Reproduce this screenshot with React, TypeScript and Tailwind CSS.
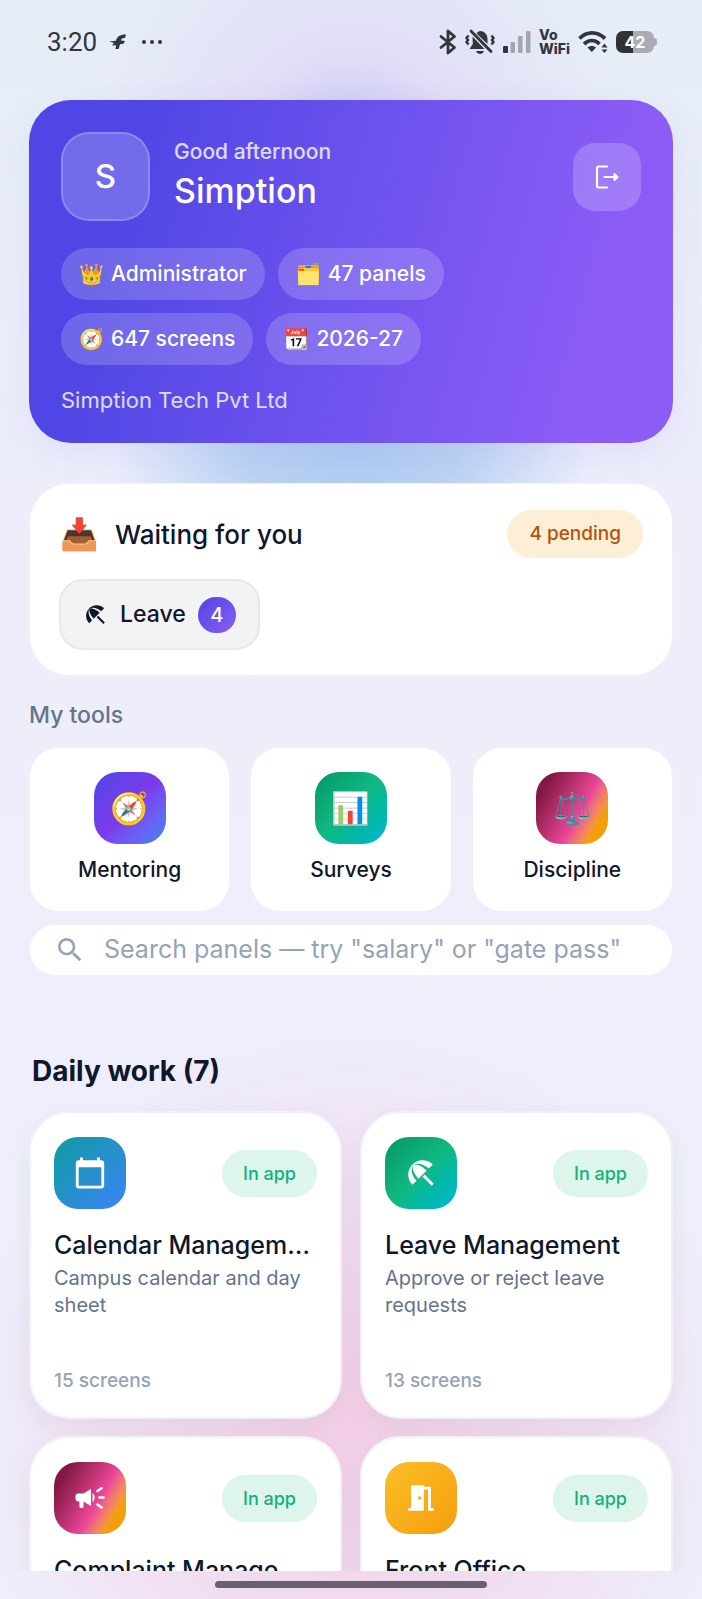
import type { ReactNode } from "react";
import { MdBeachAccess, MdCalendarToday, MdMeetingRoom, MdSearch } from "react-icons/md";

const chips = [
  { emoji: "👑", label: "Administrator" },
  { emoji: "🗂️", label: "47 panels" },
  { emoji: "🧭", label: "647 screens" },
  { emoji: "📆", label: "2026-27" },
];

const tools = [
  { name: "Mentoring", emoji: "🧭", tile: "bg-linear-135 from-[#4f46e5] via-[#7c3aed] to-[#3b82f6]" },
  { name: "Surveys", emoji: "📊", tile: "bg-linear-135 from-[#059669] via-[#10b981] to-[#06b6d4]" },
  { name: "Discipline", emoji: "⚖️", tile: "bg-linear-120 from-[#831843] from-15% via-[#ec4899] via-60% to-[#f59e0b] to-80%" },
];

const panels = [
  {
    name: "Calendar Management",
    text: "Campus calendar and day sheet",
    screens: 15,
    icon: <MdCalendarToday />,
    tile: "bg-linear-135 from-[#0d9a9f] to-[#3b82f6]",
  },
  {
    name: "Leave Management",
    text: "Approve or reject leave requests",
    screens: 13,
    icon: <MdBeachAccess />,
    tile: "bg-linear-135 from-[#059669] via-[#10b981] to-[#06b6d4]",
  },
  {
    name: "Complaint Management",
    icon: <MegaphoneIcon />,
    tile: "bg-linear-120 from-[#831843] from-15% via-[#ec4899] via-60% to-[#f59e0b] to-80%",
  },
  {
    name: "Front Office",
    icon: <MdMeetingRoom />,
    tile: "bg-linear-135 from-[#fbbf24] to-[#f59e0b]",
  },
];

function MegaphoneIcon() {
  return (
    <svg className="h-[22px] w-[30px]" viewBox="0 0 30 22" fill="currentColor" aria-hidden="true">
      <path d="M3 6.500h5.500L16 2v17l-7.500-4.500V20q0 1-1 1H5.500q-1 0-1-1v-5.500H3q-2.500-.2-2.500-2.700V9.200Q.5 6.700 3 6.500ZM17.500 5.800q2.200 2 2.200 4.700t-2.200 4.700Z" />
      <path d="m22.500 4 4-2.800M24.500 10.500h4M22.500 17.500l4 3" stroke="currentColor" strokeWidth="2.600" strokeLinecap="round" />
    </svg>
  );
}

function StatusBar() {
  return (
    <div className="flex h-[84px] shrink-0 items-center justify-between pr-[45px] pl-[47px] text-[#33353d]">
      <div className="flex items-center">
        <span className="font-[Roboto,sans-serif] text-[26px] leading-8">3:20</span>
        <svg className="ml-3 h-4 w-5" viewBox="0 0 20 16" fill="currentColor" aria-hidden="true">
          <path d="M0 7.500 7 6.800C8 2.500 11.500.3 17 .6L16 4c-2.500-.4-3.500.5-4 2.600L16 7 14.500 9.800 11 10.200 9.600 15H6.400L7.200 11.200 3 11.500 5 9Z" />
        </svg>
        <svg className="ml-3 h-2 w-6" viewBox="0 0 24 8" fill="currentColor" aria-hidden="true">
          <circle cx="3" cy="4" r="2" />
          <circle cx="11" cy="4" r="2" />
          <circle cx="19" cy="4" r="2" />
        </svg>
      </div>
      <div className="flex items-center">
        <svg className="h-[26px] w-[18px]" viewBox="0 0 18 26" fill="none" stroke="currentColor" strokeWidth="2.800" strokeLinejoin="round" strokeLinecap="round" aria-hidden="true">
          <path d="M2 7.500 15.500 18.500 9 24V2l6.500 5.500L2 18.500" />
        </svg>
        <svg className="ml-2 h-[26px] w-[30px]" viewBox="0 0 30 26" fill="none" stroke="currentColor" aria-hidden="true">
          <path d="M11.500 4.500C12.500 3 14 2 15 2c4 .2 7.500 3 7.500 7.500v5.500ZM7.500 7.500 7.800 15 4.500 20H19.500Z" fill="currentColor" stroke="none" />
          <path d="M11 22h8c-1 2.300-2.500 3-4 3s-3-.7-4-3Z" fill="currentColor" stroke="none" />
          <path d="M6 2 26 22.500" strokeWidth="2.800" strokeLinecap="round" />
          <path d="m3.500 6.500-2 2.500L3 11l-1.500 2 2 2.500M26.500 6.500l2 2.500L27 11l1.500 2-2 2.500" strokeWidth="2.400" />
        </svg>
        <svg className="ml-2 h-[23px] w-7" viewBox="0 0 28 23" aria-hidden="true">
          <rect x="0" y="15" width="5" height="7" rx="1" fill="#33353d" />
          <rect x="7.500" y="11" width="4.500" height="11" rx="1" fill="#a5a5b2" />
          <rect x="15" y="5" width="4.500" height="17" rx="1" fill="#a5a5b2" />
          <rect x="23" y="0" width="4.500" height="22" rx="1" fill="#a5a5b2" />
        </svg>
        <div className="ml-2 font-[Inter,sans-serif] text-[14px] leading-[14px] font-extrabold">
          <p>Vo</p>
          <p>WiFi</p>
        </div>
        <svg className="ml-2 h-6 w-[30px]" viewBox="0 0 30 24" fill="none" stroke="currentColor" aria-hidden="true">
          <path d="M1.500 8.500C9 1 19 1 27 8.500" strokeWidth="3.800" />
          <path d="M6 14c5-4.600 11-4.600 15.500 0" strokeWidth="3.800" />
          <path d="M9.500 17.500c2.500-2 6-2 8.500 0L13.800 22Z" fill="currentColor" stroke="none" />
          <path d="m26.500 13.500 3 4h-6ZM26.500 23l-3-3.500h6Z" fill="currentColor" stroke="none" />
        </svg>
        <div className="ml-2 flex items-center">
          <div className="flex h-[22px] w-[38px] items-center justify-center rounded-[7px] bg-linear-to-r from-[#2f3136] from-46% to-[#a9abb5] to-46% font-[Inter,sans-serif] text-[16px] leading-5 font-bold text-white">
            42
          </div>
          <div className="h-2 w-[3px] rounded-r-full bg-[#a9abb5]" />
        </div>
      </div>
    </div>
  );
}

function Tile({ className, children }: { className: string; children: ReactNode }) {
  return (
    <span className={`flex size-[72px] shrink-0 items-center justify-center rounded-3xl text-white ${className}`}>
      {children}
    </span>
  );
}

function HeaderCard() {
  return (
    <header className="rounded-[42px] bg-linear-105 from-[#4f46e5] from-15% to-[#8b5cf6] to-85% px-8 pt-8 pb-[30px] text-white shadow-[0_12px_40px_rgba(79,70,229,0.08)]">
      <div className="flex items-center gap-6">
        <div className="flex size-[89px] shrink-0 items-center justify-center rounded-[28px] border-2 border-white/20 bg-white/20 text-[33px] font-medium">
          S
        </div>
        <div className="min-w-0 flex-1">
          <p className="text-[21px] leading-7 font-medium text-white/80">Good afternoon</p>
          <h1 className="truncate text-[34px] leading-[50px] font-medium">Simption</h1>
        </div>
        <button type="button" aria-label="Log out" className="flex size-[68px] shrink-0 items-center justify-center rounded-[22px] bg-white/20">
          <svg className="h-6 w-6" viewBox="0 0 24 24" fill="none" stroke="currentColor" strokeWidth="2.200" strokeLinecap="round" strokeLinejoin="round" aria-hidden="true">
            <path d="M12 1.500H3.500Q2 1.500 2 3v18q0 1.500 1.500 1.500H12M9.500 12H20" />
            <path d="m19.500 9 3 3-3 3Z" fill="currentColor" strokeWidth="2" />
          </svg>
        </button>
      </div>
      <ul className="mt-[27px] flex max-w-[460px] flex-wrap gap-[13px]">
        {chips.map((chip) => (
          <li key={chip.label} className="flex h-[52px] items-center gap-[7px] rounded-full bg-white/18 px-[18px] text-[21px] font-medium">
            <span className="text-[20px]">{chip.emoji}</span>
            {chip.label}
          </li>
        ))}
      </ul>
      <p className="mt-[22px] text-[22px] leading-[26px] text-white/80">Simption Tech Pvt Ltd</p>
    </header>
  );
}

function WaitingCard() {
  return (
    <section className="mt-10 rounded-[40px] border border-[#f0f0f6] bg-white px-[29px] pt-[26px] pb-[25px]">
      <div className="flex items-center">
        <span className="w-14 pl-px text-[31px] leading-[48px]">📥</span>
        <h2 className="flex-1 text-[26px] font-medium">Waiting for you</h2>
        <span className="flex h-12 items-center rounded-full bg-[#fdefd6] px-[22px] text-[19px] font-medium text-[#b45309]">
          4 pending
        </span>
      </div>
      <button type="button" className="mt-[21px] flex h-[71px] items-center rounded-3xl border-2 border-[#e8e8ea] bg-[#f3f3f4] px-[22px] text-[23px] font-medium">
        <MdBeachAccess className="size-[25px]" />
        <span className="ml-3">Leave</span>
        <span className="ml-3 flex h-9 w-[38px] items-center justify-center rounded-full bg-linear-135 from-[#4f46e5] to-[#8b5cf6] text-[20px] font-medium text-white">
          4
        </span>
      </button>
    </section>
  );
}

function MyTools() {
  return (
    <section className="mt-[25px]">
      <h2 className="text-[23px] leading-7 font-medium text-[#64748b]">My tools</h2>
      <div className="mt-[18px] grid grid-cols-3 gap-5">
        {tools.map((tool) => (
          <button key={tool.name} type="button" className="flex h-[165px] flex-col items-center rounded-[30px] border border-[#f0f0f6] bg-white pt-6">
            <Tile className={`text-[31px] ${tool.tile}`}>{tool.emoji}</Tile>
            <span className="mt-3 text-[21px] leading-7 font-medium">{tool.name}</span>
          </button>
        ))}
      </div>
      <label className="mt-3 flex h-[52px] items-center rounded-full border border-[#f0f0f6] bg-white px-6 text-[#94a3b8]">
        <MdSearch className="size-8 shrink-0" />
        <input
          type="text"
          aria-label="Search panels"
          placeholder={'Search panels — try "salary" or "gate pass"'}
          className="ml-[18px] min-w-0 flex-1 text-[25px] outline-none placeholder:text-[#94a3b8]"
        />
      </label>
    </section>
  );
}

function DailyWork() {
  return (
    <section className="mt-[77px]">
      <h2 className="px-[3px] text-[28px] leading-9 font-bold">Daily work (7)</h2>
      <div className="mt-[22px] grid grid-cols-2 gap-x-[18px] gap-y-[17px]">
        {panels.map((panel) => (
          <a
            key={panel.name}
            href="#"
            className="flex h-[308px] flex-col rounded-[40px] border-2 border-[#f3f1f7] bg-white px-[23px] pt-6 pb-6 shadow-[0_8px_24px_rgba(15,23,42,0.05)]"
          >
            <span className="flex items-center justify-between">
              <Tile className={`text-[34px] ${panel.tile}`}>{panel.icon}</Tile>
              <span className="flex h-[47px] items-center rounded-full bg-[#def5eb] px-[21px] text-[18px] font-medium text-[#10b27c]">
                In app
              </span>
            </span>
            <span className="mt-5 truncate text-[25px] leading-8 font-medium">{panel.name}</span>
            {panel.text && <span className="mt-1 text-[20px] leading-[27px] text-[#64748b]">{panel.text}</span>}
            {panel.screens && (
              <span className="mt-auto text-[19px] leading-6 font-medium text-[#94a3b8]">{panel.screens} screens</span>
            )}
          </a>
        ))}
      </div>
    </section>
  );
}

export default function App() {
  return (
    <div className="flex h-screen flex-col overflow-hidden bg-[radial-gradient(circle_at_50%_430px,rgba(140,185,235,0.65)_0px,rgba(140,185,235,0.5)_110px,rgba(140,185,235,0)_240px),radial-gradient(circle_at_50%_160px,rgba(185,185,240,0.8)_0px,rgba(220,212,246,0.6)_110px,rgba(228,220,246,0)_270px),radial-gradient(circle_at_50%_1420px,rgba(242,200,226,0.85)_0px,rgba(242,203,228,0.5)_200px,rgba(242,203,228,0)_400px),linear-gradient(180deg,#e6edf7_0%,#eeeefb_35%,#efeffb_100%)] font-[Inter,sans-serif] text-[#0f172a]">
      <StatusBar />
      <main className="min-h-0 flex-1 overflow-hidden px-[29px] pt-4">
        <HeaderCard />
        <WaitingCard />
        <MyTools />
        <DailyWork />
      </main>
      <footer className="flex h-7 shrink-0 justify-center pt-[10px]">
        <div className="h-[7px] w-[272px] rounded-full bg-[#6b6070]" />
      </footer>
    </div>
  );
}
